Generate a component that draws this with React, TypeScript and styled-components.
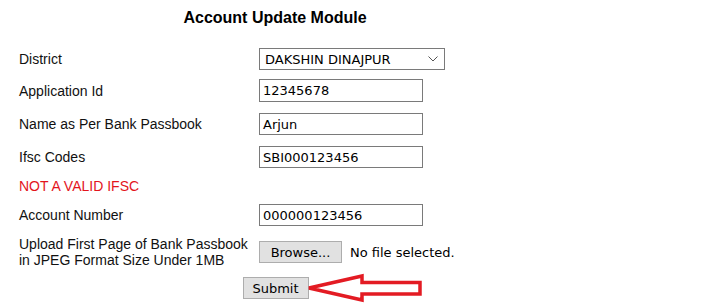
import React from "react";
import styled, { createGlobalStyle } from "styled-components";

const Global = createGlobalStyle`
  html, body { margin: 0; padding: 0; background: #ffffff; }
  body { font-family: "Liberation Sans", Arial, sans-serif; color: #111; }
`;

const Page = styled.div`
  width: 711px;
  height: 304px;
  overflow: hidden;
  padding-top: 9px;
  box-sizing: border-box;
`;

const Title = styled.h1`
  width: 550px;
  margin: 0;
  text-align: center;
  font-size: 16px;
  line-height: 18px;
  font-weight: bold;
  color: #000;
`;

const Form = styled.div`
  display: grid;
  grid-template-columns: 240px 1fr;
  padding-left: 19px;
  margin-top: 21px;
  width: 531px;
`;

const Label = styled.div<{ $top: number; $height: number }>`
  margin-top: ${(p) => p.$top}px;
  height: ${(p) => p.$height}px;
  display: flex;
  align-items: center;
  font-size: 14px;
  line-height: 16px;
`;

const Cell = styled.div<{ $top: number; $height: number }>`
  margin-top: ${(p) => p.$top}px;
  height: ${(p) => p.$height}px;
  display: flex;
  align-items: center;
`;

const Error = styled.div<{ $top: number; $height: number }>`
  grid-column: 1 / 3;
  margin-top: ${(p) => p.$top}px;
  height: ${(p) => p.$height}px;
  display: flex;
  align-items: center;
  color: #e3141c;
  font-size: 14px;
`;

const controlFont = `"DejaVu Sans", Tahoma, Verdana, sans-serif`;

const Field = styled.div<{ $width: number }>`
  width: ${(p) => p.$width}px;
  height: 100%;
  box-sizing: border-box;
  border: 1px solid #7a7a7a;
  background: #fff;
  display: flex;
  align-items: center;
  padding-left: 3px;
  font-family: ${controlFont};
  font-size: 13px;
  color: #000;
`;

const SelectBox = styled(Field)`
  justify-content: space-between;
  padding-left: 5px;
  padding-right: 6px;
`;

const Chevron = styled.svg`
  width: 10px;
  height: 6px;
`;

const Btn = styled.div<{ $width: number }>`
  width: ${(p) => p.$width}px;
  height: 100%;
  box-sizing: border-box;
  border: 1px solid #adadad;
  background: #e1e1e1;
  display: flex;
  align-items: center;
  justify-content: center;
  font-family: ${controlFont};
  font-size: 13px;
  color: #000;
`;

const FileText = styled.span`
  margin-left: 8px;
  font-family: ${controlFont};
  font-size: 13px;
  color: #000;
`;

const SubmitRow = styled.div`
  width: 550px;
  margin-top: 9px;
  height: 22px;
  display: flex;
  justify-content: center;
`;

const SubmitWrap = styled.div`
  position: relative;
  height: 22px;
  margin-left: 1px;
`;

const Arrow = styled.svg`
  position: absolute;
  left: 64px;
  top: -4px;
  width: 120px;
  height: 30px;
  overflow: visible;
`;

export default function App() {
  return (
    <Page>
      <Global />
      <Title>Account Update Module</Title>
      <Form>
        <Label $top={0} $height={22}>District</Label>
        <Cell $top={0} $height={22}>
          <SelectBox $width={186}>
            <span>DAKSHIN DINAJPUR</span>
            <Chevron viewBox="0 0 10 6">
              <path d="M0.5 0.5 L5 5 L9.5 0.5" fill="none" stroke="#555" strokeWidth="1" />
            </Chevron>
          </SelectBox>
        </Cell>

        <Label $top={9} $height={23}>Application Id</Label>
        <Cell $top={9} $height={23}>
          <Field $width={164}>12345678</Field>
        </Cell>

        <Label $top={11} $height={22}>Name as Per Bank Passbook</Label>
        <Cell $top={11} $height={22}>
          <Field $width={164}>Arjun</Field>
        </Cell>

        <Label $top={11} $height={22}>Ifsc Codes</Label>
        <Cell $top={11} $height={22}>
          <Field $width={164}>SBI000123456</Field>
        </Cell>

        <Error $top={8} $height={20}>NOT A VALID IFSC</Error>

        <Label $top={8} $height={22}>Account Number</Label>
        <Cell $top={8} $height={22}>
          <Field $width={164}>000000123456</Field>
        </Cell>

        <Label $top={10} $height={32}>
          Upload First Page of Bank Passbook
          <br />
          in JPEG Format Size Under 1MB
        </Label>
        <Cell $top={10} $height={32}>
          <Cell $top={0} $height={22}>
            <Btn $width={83}>Browse...</Btn>
            <FileText>No file selected.</FileText>
          </Cell>
        </Cell>
      </Form>
      <SubmitRow>
        <SubmitWrap>
          <Btn $width={66}>Submit</Btn>
          <Arrow viewBox="0 0 120 30">
            <path
              d="M2 15 L55 3 L55 9.5 L113 9.5 L113 21 L55 21 L55 27 Z"
              fill="none"
              stroke="#e31b23"
              strokeWidth="3.5"
              strokeLinejoin="miter"
            />
          </Arrow>
        </SubmitWrap>
      </SubmitRow>
    </Page>
  );
}
